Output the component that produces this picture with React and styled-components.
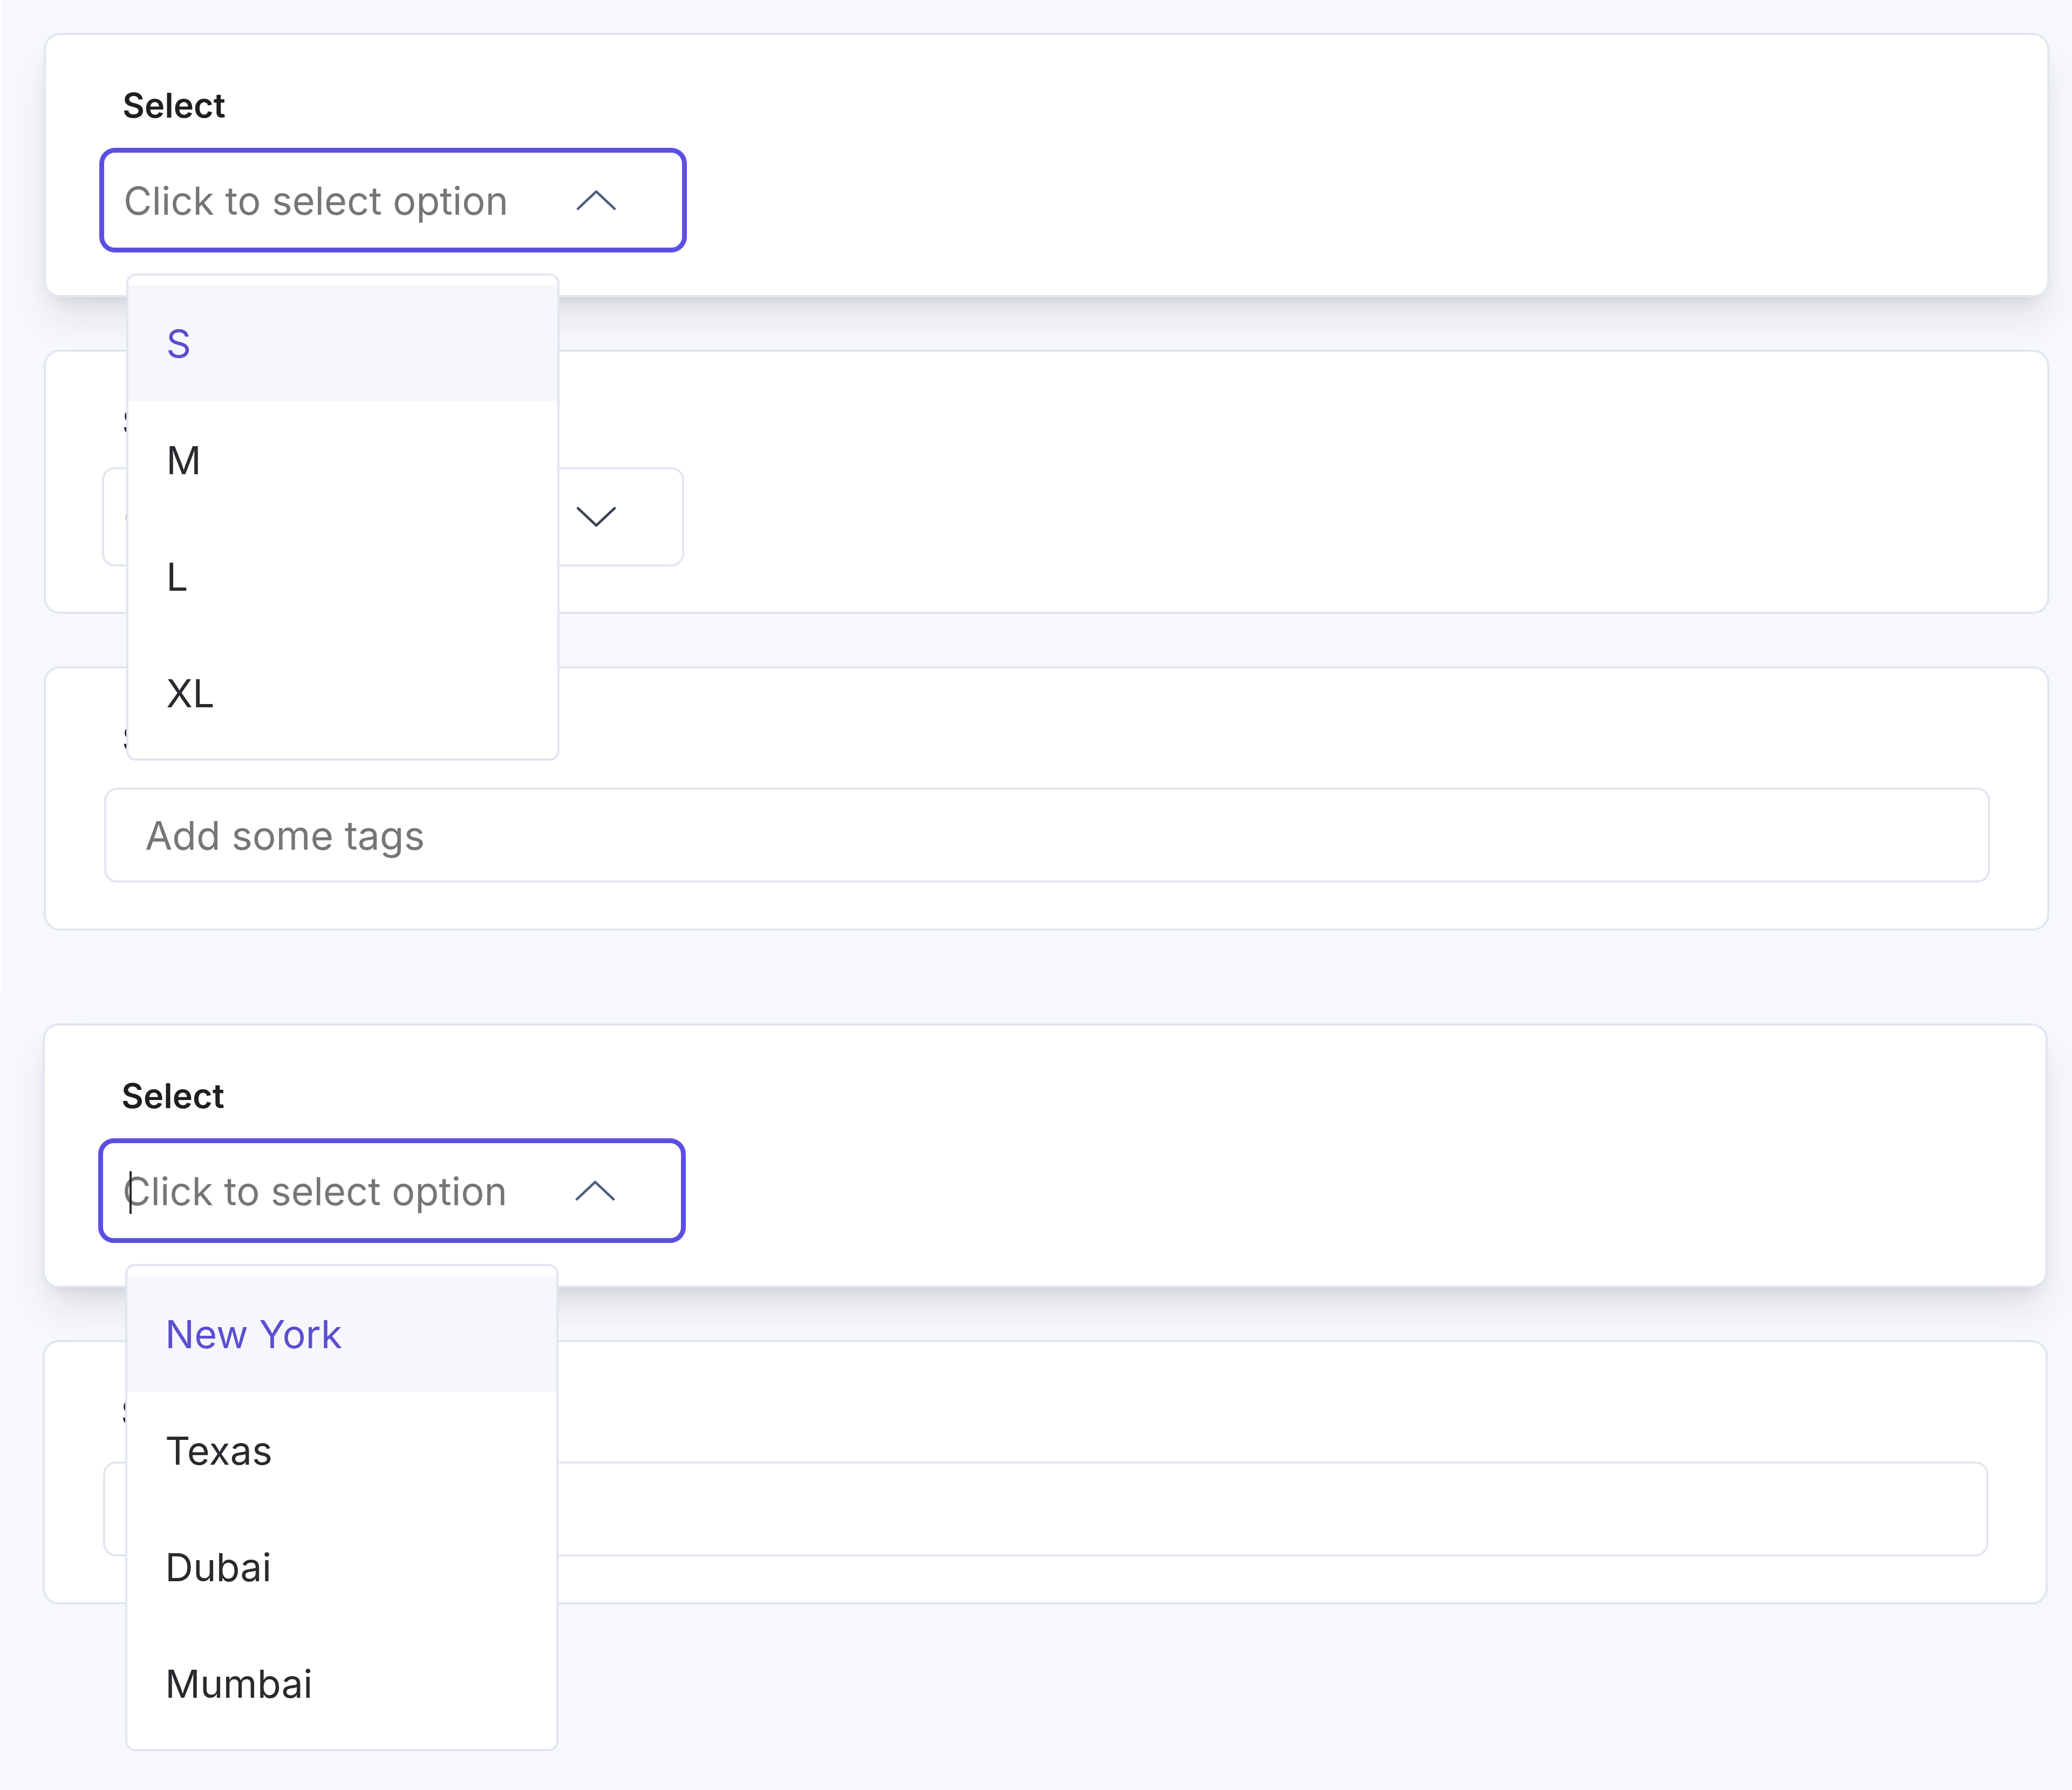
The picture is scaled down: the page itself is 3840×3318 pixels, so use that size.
import React from 'react';
import styled, { createGlobalStyle } from 'styled-components';

const PURPLE = '#5b4fe3';
const LINE = '#e1e6ef';

const GlobalStyle = createGlobalStyle`
  * {
    box-sizing: border-box;
  }

  html, body {
    margin: 0;
    padding: 0;
    background: #f7f8fc;
  }

  body {
    font-family: 'Inter', 'Noto Sans', sans-serif;
    -webkit-font-smoothing: antialiased;
  }
`;

const ChevronUp = ({ color = '#506080' }) => (
  <svg width="74" height="38" viewBox="0 0 74 38" fill="none">
    <polyline points="3,35 37,3 71,35" stroke={color} strokeWidth="4.5" strokeLinecap="round" strokeLinejoin="round" />
  </svg>
);

const ChevronDown = ({ color = '#3a4152' }) => (
  <svg width="74" height="38" viewBox="0 0 74 38" fill="none">
    <polyline points="3,3 37,35 71,3" stroke={color} strokeWidth="4.5" strokeLinecap="round" strokeLinejoin="round" />
  </svg>
);

const SelectField = ({ open, options = [], caret }) => (
  <Field>
    <SelectBox $open={open}>
      {caret && <Caret />}
      <Placeholder>Click to select option</Placeholder>
      {open ? <ChevronUp /> : <ChevronDown />}
    </SelectBox>
    {open && (
      <Menu>
        {options.map((opt, i) => (
          <MenuItem key={opt} $active={i === 0}>{opt}</MenuItem>
        ))}
      </Menu>
    )}
  </Field>
);

const SelectCard = ({ open, options, caret }) => (
  <Card $active={open}>
    <Label>Select</Label>
    <SelectField open={open} options={options} caret={caret} />
  </Card>
);

const TagsCard = () => (
  <Card>
    <Label>Select tags</Label>
    <TagInput>
      <TagPlaceholder>Add some tags</TagPlaceholder>
    </TagInput>
  </Card>
);

const App = () => {
  return (
    <>
      <GlobalStyle />
      <Frame $edge $height={1836}>
        <SelectCard open options={['S', 'M', 'L', 'XL']} />
        <SelectCard />
        <TagsCard />
      </Frame>
      <Frame $height={1482}>
        <SelectCard open caret options={['New York', 'Texas', 'Dubai', 'Mumbai']} />
        <TagsCard />
      </Frame>
    </>
  );
};

const Frame = styled.section`
  display: flex;
  flex-direction: column;
  gap: 97px;
  height: ${p => p.$height}px;
  padding: 61px ${p => (p.$edge ? 42 : 45)}px 0 ${p => (p.$edge ? 78 : 79)}px;
  border-left: ${p => (p.$edge ? '3px solid #ffffff' : 'none')};
  background: #f7f8fc;
`;

const Card = styled.div`
  position: relative;
  z-index: ${p => (p.$active ? 2 : 1)};
  height: 490px;
  flex-shrink: 0;
  background: #ffffff;
  border: 4px solid ${LINE};
  border-radius: 30px;
  padding: 92px 104px 0;
  box-shadow: ${p =>
    p.$active
      ? '0 45px 70px -12px rgba(15, 23, 42, 0.11), 0 18px 30px -16px rgba(15, 23, 42, 0.10)'
      : 'none'};
`;

const Label = styled.div`
  font-size: 63px;
  line-height: 76px;
  font-weight: 600;
  color: #1f1f22;
  margin: 0 0 46px 38px;
  white-space: nowrap;
`;

const Field = styled.div`
  position: relative;
  width: 1079px;
`;

const SelectBox = styled.div`
  position: relative;
  display: flex;
  align-items: center;
  height: 184px;
  padding: 0 122px 0 36px;
  border: 4px solid ${p => (p.$open ? PURPLE : LINE)};
  border-radius: 24px;
  box-shadow: ${p => (p.$open ? `0 0 0 5px ${PURPLE}` : 'none')};
  background: #ffffff;
`;

const Placeholder = styled.span`
  flex: 1;
  font-size: 72px;
  color: #767676;
  white-space: nowrap;
`;

const Caret = styled.span`
  position: absolute;
  left: 49px;
  top: 50%;
  width: 4px;
  height: 79px;
  margin-top: -36px;
  background: #2b2b2b;
`;

const Menu = styled.ul`
  position: absolute;
  top: calc(100% + 44px);
  left: 45px;
  z-index: 5;
  width: 803px;
  margin: 0;
  padding: 17px 0 14px;
  list-style: none;
  background: #ffffff;
  border: 4px solid ${LINE};
  border-radius: 18px;
`;

const MenuItem = styled.li`
  display: flex;
  align-items: center;
  height: 216px;
  padding-left: 70px;
  font-size: 72px;
  color: ${p => (p.$active ? '#5a4fcf' : '#2a2a2e')};
  background: ${p => (p.$active ? '#f6f7fc' : 'transparent')};
`;

const TagInput = styled.div`
  display: flex;
  align-items: center;
  height: 176px;
  margin: 53px 2px 0 4px;
  padding-left: 72px;
  border: 4px solid ${LINE};
  border-radius: 24px;
  background: #ffffff;
`;

const TagPlaceholder = styled.span`
  font-size: 73px;
  color: #767676;
`;

export default App;
